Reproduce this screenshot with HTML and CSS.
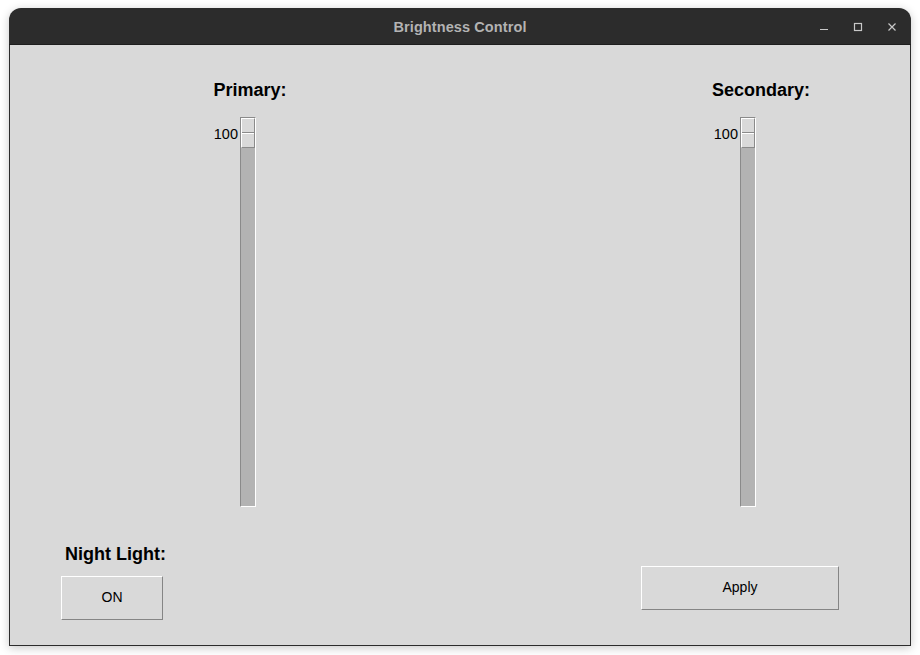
FILE: index.html
```html
<!DOCTYPE html>
<html>
<head>
<meta charset="utf-8">
<link rel="stylesheet" href="styles.css">
</head>
<body>
<div class="window">
  <div class="titlebar">
    <span class="title">Brightness Control</span>
    <div class="controls">
      <svg class="ctl" width="10" height="10" viewBox="0 0 10 10"><path d="M1 7.5H9" stroke="#c8c8c8" stroke-width="1.2"/></svg>
      <svg class="ctl" width="10" height="10" viewBox="0 0 10 10"><rect x="1.5" y="1.5" width="7" height="7" fill="none" stroke="#c8c8c8" stroke-width="1.2"/></svg>
      <svg class="ctl" width="10" height="10" viewBox="0 0 10 10"><path d="M1.5 1.5L8.5 8.5M8.5 1.5L1.5 8.5" stroke="#c8c8c8" stroke-width="1.2"/></svg>
    </div>
  </div>
  <div class="content">
    <div class="sliders">
      <div class="col col-primary">
        <div class="label">Primary:</div>
        <div class="scale">
          <span class="value">100</span>
          <div class="trough"><div class="handle"></div></div>
        </div>
      </div>
      <div class="col col-secondary">
        <div class="label">Secondary:</div>
        <div class="scale">
          <span class="value">100</span>
          <div class="trough"><div class="handle"></div></div>
        </div>
      </div>
    </div>
    <div class="bottom">
      <div class="night">
        <div class="label night-label">Night Light:</div>
        <button class="btn btn-on">ON</button>
      </div>
      <button class="btn btn-apply">Apply</button>
    </div>
  </div>
</div>
</body>
</html>
```
FILE: styles.css
```css
html, body {
  margin: 0;
  padding: 0;
  background: #ffffff;
}
body {
  width: 920px;
  height: 655px;
  overflow: hidden;
  font-family: "Liberation Sans", Arial, sans-serif;
}
.window {
  margin: 8px 0 0 9px;
  width: 902px;
  height: 638px;
  border-radius: 12px 12px 0 0;
  overflow: hidden;
  background: #2c2c2c;
  box-shadow: 0 2px 10px rgba(0,0,0,0.22);
  display: flex;
  flex-direction: column;
}
.titlebar {
  height: 37px;
  flex: none;
  box-sizing: border-box;
  border-bottom: 1px solid #1e1e1e;
  position: relative;
  display: flex;
  align-items: center;
  justify-content: center;
}
.title {
  color: #b3b3b3;
  font-family: "Liberation Sans", Arial, sans-serif;
  font-weight: bold;
  font-size: 14.5px;
  letter-spacing: 0.1px;
  margin-top: 1px;
}
.controls {
  position: absolute;
  right: 14px;
  top: 14px;
  display: flex;
  gap: 24px;
}
.ctl { display: block; }
.content {
  flex: 1;
  background: #d9d9d9;
  border: 1px solid #2c2c2c;
  border-top: none;
  display: flex;
  flex-direction: column;
}
.sliders {
  display: flex;
  padding-top: 35px;
  padding-left: 190px;
}
.col {
  width: 100px;
  display: flex;
  flex-direction: column;
}
.col-secondary {
  margin-left: 411px;
}
.label {
  font-weight: bold;
  font-size: 18px;
  line-height: 21px;
  color: #000;
  text-align: center;
  white-space: nowrap;
}
.scale {
  margin-top: 16px;
  display: flex;
  align-items: flex-start;
}
.col-primary .scale { margin-left: 7px; }
.col-secondary .scale { margin-left: -4px; }
.value {
  width: 31px;
  text-align: right;
  font-size: 14.5px;
  line-height: 16px;
  margin-top: 9px;
  margin-right: 2px;
  color: #000;
}
.trough {
  width: 16px;
  height: 390px;
  box-sizing: border-box;
  background: #b3b3b3;
  border-top: 1px solid #8a8a8a;
  border-left: 1px solid #8a8a8a;
  border-right: 1px solid #ffffff;
  border-bottom: 1px solid #ffffff;
}
.handle {
  width: 14px;
  height: 30px;
  box-sizing: border-box;
  background: #d9d9d9;
  border-top: 1px solid #ffffff;
  border-left: 1px solid #ffffff;
  border-right: 1px solid #8a8a8a;
  border-bottom: 1px solid #8a8a8a;
  position: relative;
}
.handle::after {
  content: "";
  position: absolute;
  left: 0;
  right: 0;
  top: 13px;
  height: 1px;
  background: #8a8a8a;
  border-bottom: 1px solid #ffffff;
}
.bottom {
  display: flex;
  align-items: flex-start;
  padding-top: 37px;
  padding-left: 51px;
}
.night {
  width: 110px;
  display: flex;
  flex-direction: column;
  align-items: flex-start;
}
.night-label {
  margin-left: 4px;
}
.btn {
  font-family: "Liberation Sans", Arial, sans-serif;
  font-size: 14px;
  color: #000;
  background: #d9d9d9;
  box-sizing: border-box;
  border-top: 1px solid #ffffff;
  border-left: 1px solid #ffffff;
  border-right: 1px solid #858585;
  border-bottom: 1px solid #858585;
  padding: 0 0 2px 0;
  margin: 0;
}
.btn-on {
  width: 102px;
  height: 44px;
  margin-top: 11px;
}
.btn-apply {
  width: 198px;
  height: 44px;
  margin-top: 22px;
  margin-left: 470px;
}
```
